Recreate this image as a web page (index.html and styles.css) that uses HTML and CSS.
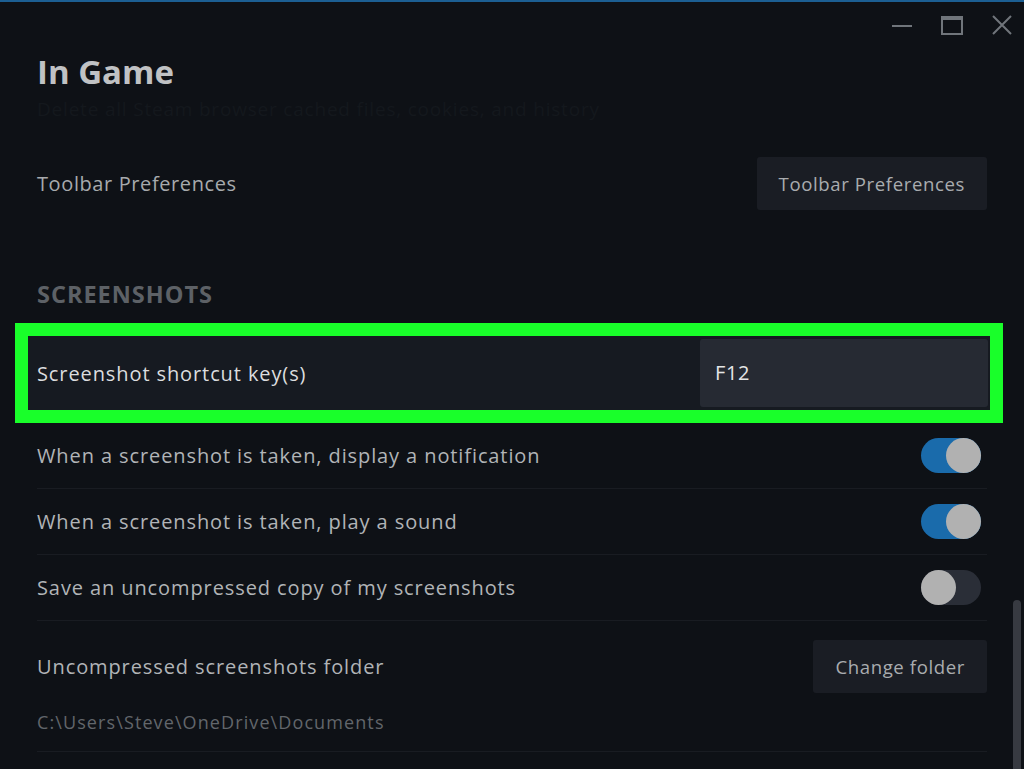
FILE: index.html
```html
<!DOCTYPE html>
<html lang="en">
<head>
<meta charset="utf-8">
<title>In Game</title>
<link rel="stylesheet" href="styles.css">
</head>
<body>
<div class="window">
  <div class="topline"></div>
  <div class="controls">
    <svg class="ctl" viewBox="0 0 24 24" width="24" height="24"><line x1="2" y1="13" x2="22" y2="13" stroke="#70757b" stroke-width="2"/></svg>
    <svg class="ctl" viewBox="0 0 24 24" width="24" height="24"><rect x="2" y="4" width="20" height="17" fill="none" stroke="#70757b" stroke-width="2"/><rect x="2" y="4" width="20" height="3" fill="#70757b"/></svg>
    <svg class="ctl" viewBox="0 0 24 24" width="24" height="24"><path d="M3 3 L21 21 M21 3 L3 21" stroke="#70757b" stroke-width="2" fill="none"/></svg>
  </div>
  <div class="content">
    <h1 class="title">In Game</h1>
    <div class="faded">Delete all Steam browser cached files, cookies, and history</div>

    <div class="row row-toolbar">
      <span class="label">Toolbar Preferences</span>
      <button class="btn">Toolbar Preferences</button>
    </div>

    <div class="section">SCREENSHOTS</div>

    <div class="row row-highlight">
      <span class="label label-bright">Screenshot shortcut key(s)</span>
      <div class="keyinput">F12</div>
    </div>

    <div class="row row-toggle">
      <span class="label">When a screenshot is taken, display a notification</span>
      <span class="toggle on"><span class="knob"></span></span>
    </div>
    <div class="row row-toggle">
      <span class="label">When a screenshot is taken, play a sound</span>
      <span class="toggle on"><span class="knob"></span></span>
    </div>
    <div class="row row-toggle">
      <span class="label">Save an uncompressed copy of my screenshots</span>
      <span class="toggle off"><span class="knob"></span></span>
    </div>
    <div class="row-folder">
      <div class="folder-top">
        <span class="label">Uncompressed screenshots folder</span>
        <button class="btn">Change folder</button>
      </div>
      <div class="path">C:\Users\Steve\OneDrive\Documents</div>
    </div>
  </div>
  <div class="scrollbar"></div>
</div>
</body>
</html>
```

FILE: styles.css
```css
html, body {
  margin: 0;
  padding: 0;
  background: #0e1116;
  height: 100%;
  overflow: hidden;
}

.window {
  position: relative;
  width: 1024px;
  height: 769px;
  background: #0e1116;
  font-family: "Open Sans", "Noto Sans", sans-serif;
  color: #b4b7ba;
  overflow: hidden;
}

.topline {
  height: 2px;
  background: #1c5f93;
}

.controls {
  display: flex;
  justify-content: flex-end;
  gap: 26px;
  padding: 11px 10px 0 0;
  height: 26px;
}

.ctl {
  display: block;
}

.content {
  padding: 0 37px;
}

.title {
  margin: 13px 0 0 0;
  font-size: 33px;
  line-height: 40px;
  font-weight: 700;
  color: #c0c2c4;
}

.faded {
  margin-top: 4px;
  font-size: 19px;
  line-height: 26px;
  letter-spacing: 0.8px;
  color: #14181d;
}

.row {
  display: flex;
  align-items: center;
  justify-content: space-between;
}

.label {
  font-size: 20px;
  letter-spacing: 0.9px;
  color: #b1b4b7;
}

.label-bright {
  color: #dcdddf;
}

.row-toolbar {
  margin-top: 34px;
  height: 54px;
}

.row-toolbar .label {
  color: #a7aaad;
  letter-spacing: 0.6px;
}

.btn {
  font-family: "Open Sans", "Noto Sans", sans-serif;
  font-size: 18.6px;
  letter-spacing: 0.6px;
  color: #a9acaf;
  background: #1a1d24;
  border: none;
  border-radius: 3px;
  height: 53px;
  padding: 0 22px;
}

.section {
  margin-top: 69px;
  font-size: 23.5px;
  line-height: 30px;
  font-weight: 700;
  color: #5d6166;
  letter-spacing: 1px;
}

.row-highlight {
  margin: 14px -16px 0 -22px;
  border: 13px solid #19ff2a;
  background: #161a21;
  height: 74px;
  padding: 0 2px 0 9px;
}

.keyinput {
  box-sizing: border-box;
  width: 288px;
  height: 68px;
  margin-top: -1px;
  background: #262a33;
  border-radius: 3px;
  padding-left: 15px;
  display: flex;
  align-items: center;
  font-size: 20px;
  letter-spacing: 0.6px;
  color: #e4e5e6;
}

.row-toggle {
  height: 65px;
  border-bottom: 1px solid #191c22;
  padding-right: 6px;
}

.toggle {
  position: relative;
  width: 60px;
  height: 35px;
  border-radius: 18px;
  display: block;
}

.toggle.on {
  background: #1a6bab;
}

.toggle.off {
  background: #2a2e37;
}

.knob {
  position: absolute;
  top: 0;
  width: 35px;
  height: 35px;
  border-radius: 50%;
  background: #b1b1b1;
}

.toggle.on .knob {
  right: 0;
}

.toggle.off .knob {
  left: 0;
}

.row-folder {
  padding-top: 19px;
  border-bottom: 1px solid #191c22;
  height: 111px;
}

.folder-top {
  display: flex;
  align-items: center;
  justify-content: space-between;
  height: 53px;
}

.path {
  margin-top: 17px;
  font-size: 18px;
  letter-spacing: 1.1px;
  color: #62666b;
}

.scrollbar {
  position: absolute;
  left: 1013px;
  top: 600px;
  width: 8px;
  height: 180px;
  border-radius: 4px;
  background: #373a41;
}
```
